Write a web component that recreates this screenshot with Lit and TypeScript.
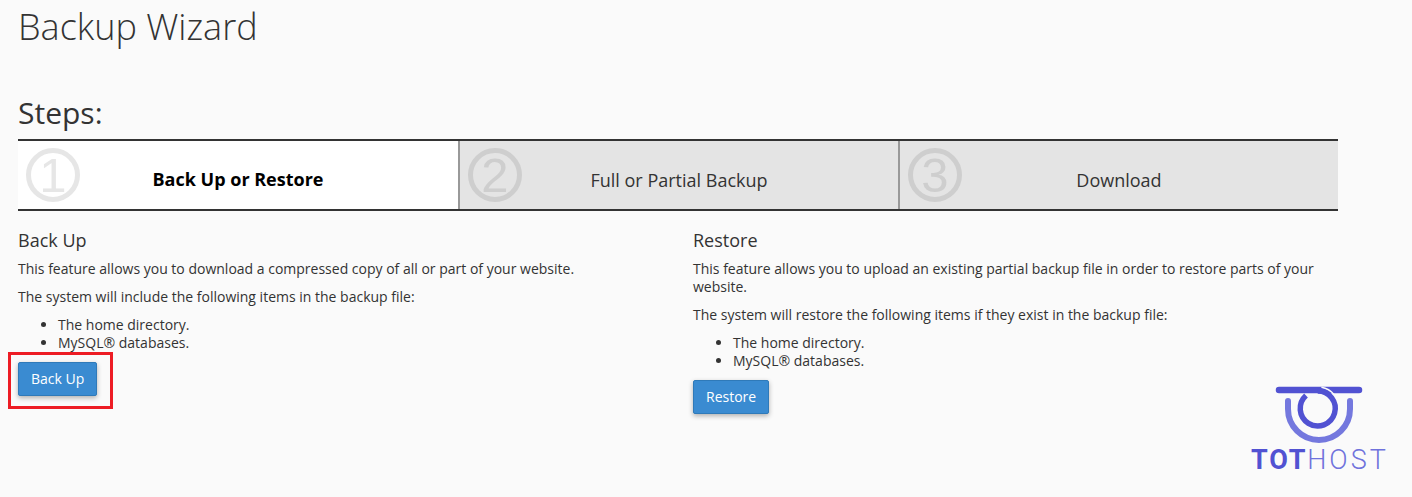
import { LitElement, html, css } from "lit";
import { customElement } from "lit/decorators.js";

const steps = [
  { n: "1", label: "Back Up or Restore", active: true },
  { n: "2", label: "Full or Partial Backup", active: false },
  { n: "3", label: "Download", active: false },
];

@customElement("app-root")
export class AppRoot extends LitElement {
  static styles = css`
    :host {
      display: block;
      position: relative;
      height: 497px;
      overflow: hidden;
      background: #fafafa;
      color: #333;
      font-family: "Open Sans", sans-serif;
      font-size: 14px;
      line-height: 18px;
    }
    .page {
      width: 1320px;
      padding-left: 18px;
    }
    h1 {
      margin: 0;
      padding-top: 2px;
      height: 51px;
      font-size: 36px;
      line-height: 50px;
      font-weight: 300;
    }
    h2 {
      margin: 39px 0 0;
      font-size: 30px;
      line-height: 41px;
      font-weight: 400;
    }
    .steps {
      display: grid;
      grid-template-columns: repeat(3, 1fr);
      height: 68px;
      margin-top: 6px;
      border-top: 2px solid #333;
      border-bottom: 2px solid #333;
    }
    .step {
      position: relative;
      display: flex;
      align-items: center;
      justify-content: center;
      padding-top: 9px;
      background: #e4e4e4;
      font-size: 18px;
      box-sizing: border-box;
      border-left: 2px solid #999;
    }
    .step:first-child {
      border-left: 0;
    }
    .step.active {
      padding-top: 7px;
      background: #fff;
      color: #000;
      font-weight: 700;
    }
    .num {
      position: absolute;
      left: 8px;
      top: 7px;
      width: 54px;
      height: 54px;
      box-sizing: border-box;
      border: 5px solid #cecece;
      border-radius: 50%;
      display: flex;
      align-items: center;
      justify-content: center;
      color: #cecece;
      font-family: "Liberation Sans", sans-serif;
      font-size: 49px;
      font-weight: 400;
      line-height: 1;
    }
    .step.active .num {
      border-color: #e6e6e6;
      color: #e6e6e6;
    }
    .columns {
      display: grid;
      grid-template-columns: 645px 645px;
      gap: 30px;
      margin-top: 17px;
    }
    h3 {
      margin: 0 0 8px;
      font-size: 18px;
      line-height: 24px;
      font-weight: 400;
    }
    p {
      margin: 0 0 10px;
    }
    ul {
      margin: 0 0 10px;
      padding-left: 40px;
    }
    .btn {
      display: block;
      box-sizing: border-box;
      height: 34px;
      padding: 0 12px;
      border: 1px solid #2f7ab9;
      border-radius: 2px;
      background: #3a8bd1;
      color: #fff;
      font: 14px/32px "Open Sans", sans-serif;
      box-shadow: 0 2px 5px rgba(0, 0, 0, 0.3);
    }
    .btn-wrap {
      position: relative;
      width: max-content;
    }
    .mark {
      position: absolute;
      left: -10px;
      top: -10px;
      width: 105px;
      height: 57px;
      box-sizing: border-box;
      border: 3px solid #ed1c24;
      pointer-events: none;
    }
    .logo {
      position: absolute;
      left: 1230px;
      top: 370px;
      width: 170px;
      height: 110px;
    }
    .brand {
      font: 300 27px "Roboto", sans-serif;
      fill: #6f72dc;
    }
    .brand .strong {
      font-weight: 700;
      letter-spacing: 1.8px;
      fill: #5152d2;
    }
    .brand .thin {
      letter-spacing: 3px;
    }
  `;

  render() {
    return html`
      <div class="page">
        <h1>Backup Wizard</h1>
        <h2>Steps:</h2>
        <div class="steps">
          ${steps.map(
            (s) => html`
              <div class="step ${s.active ? "active" : ""}">
                <span class="num">${s.n}</span>
                <span>${s.label}</span>
              </div>
            `
          )}
        </div>
        <div class="columns">
          <section>
            <h3>Back Up</h3>
            <p>This feature allows you to download a compressed copy of all or part of your website.</p>
            <p>The system will include the following items in the backup file:</p>
            <ul>
              <li>The home directory.</li>
              <li>MySQL® databases.</li>
            </ul>
            <div class="btn-wrap">
              <button class="btn">Back Up</button>
              <span class="mark"></span>
            </div>
          </section>
          <section>
            <h3>Restore</h3>
            <p>This feature allows you to upload an existing partial backup file in order to restore parts of your website.</p>
            <p>The system will restore the following items if they exist in the backup file:</p>
            <ul>
              <li>The home directory.</li>
              <li>MySQL® databases.</li>
            </ul>
            <button class="btn">Restore</button>
          </section>
        </div>
      </div>
      <svg class="logo" viewBox="0 0 170 110" fill="none">
        <path d="M58 31 V39 A31 31 0 0 0 120 39 V31" stroke="#7478de" stroke-width="6" stroke-linecap="round" />
        <path d="M49 20 H129" stroke="#5152d2" stroke-width="6.500" stroke-linecap="round" />
        <path d="M91.400 17.300 A21.500 21.500 0 0 1 104.200 24.700" stroke="#fafafa" stroke-width="1.500" />
        <path d="M76 25.500 A17.500 17.500 0 1 0 87.700 21" stroke="#5152d2" stroke-width="5.500" />
        <text class="brand" x="21" y="99"><tspan class="strong">TOT</tspan><tspan class="thin">HOST</tspan></text>
      </svg>
    `;
  }
}
